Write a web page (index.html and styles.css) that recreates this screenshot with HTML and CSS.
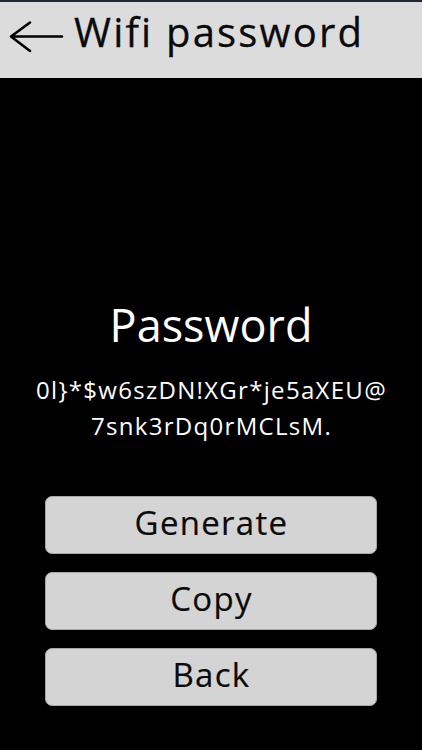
FILE: index.html
```html
<!DOCTYPE html>
<html lang="en">
<head>
<meta charset="utf-8">
<title>Wifi password</title>
<link rel="stylesheet" href="styles.css">
</head>
<body>
<header class="topbar">
  <svg class="back-icon" width="56" height="34" viewBox="0 0 56 34" aria-hidden="true">
    <path d="M3 16.5 H54 M22 2.5 L3 16.5 L22 31" fill="none" stroke="#000" stroke-width="2.6" stroke-linecap="round" stroke-linejoin="round"/>
  </svg>
  <h1 class="title">Wifi password</h1>
</header>
<main class="content">
  <h2 class="label">Password</h2>
  <p class="password">0l}*$w6szDN!XGr*je5aXEU@<br>7snk3rDq0rMCLsM.</p>
  <div class="actions">
    <button class="btn">Generate</button>
    <button class="btn">Copy</button>
    <button class="btn">Back</button>
  </div>
</main>
</body>
</html>
```
FILE: styles.css
```css
html, body {
  margin: 0;
  padding: 0;
  background: #000;
  font-family: "Open Sans", "Noto Sans", sans-serif;
}
body {
  width: 422px;
  height: 750px;
  overflow: hidden;
}
.topbar {
  box-sizing: border-box;
  height: 78px;
  border-top: 2px solid #1d2a30;
  background: #dcdcdc;
  display: flex;
  align-items: flex-start;
}
.back-icon {
  margin: 18px 0 0 8px;
  flex: none;
}
.title {
  margin: 0 0 0 10px;
  font-size: 40px;
  font-weight: 400;
  line-height: 60px;
  color: #0a0a0a;
  letter-spacing: 2.2px;
  -webkit-text-stroke: 0.3px #0a0a0a;
}
.content {
  display: flex;
  flex-direction: column;
  align-items: center;
}
.label {
  margin: 220px 0 0;
  font-size: 45px;
  font-weight: 400;
  line-height: 54px;
  color: #fff;
}
.password {
  margin: 20px 0 0;
  padding-left: 1px;
  font-size: 24px;
  line-height: 36px;
  letter-spacing: 1.3px;
  color: #fff;
  text-align: center;
}
.actions {
  margin-top: 52px;
  width: 332px;
  display: flex;
  flex-direction: column;
  gap: 18px;
}
.btn {
  box-sizing: border-box;
  height: 58px;
  padding: 0 0 5px 1px;
  border: 1px solid #a8a8a8;
  border-radius: 7px;
  background: #d4d4d4;
  color: #0a0a0a;
  font-family: "Open Sans", "Noto Sans", sans-serif;
  font-size: 33px;
  line-height: 1;
  letter-spacing: 1.3px;
  -webkit-text-stroke: 0.2px #0a0a0a;
  display: flex;
  align-items: center;
  justify-content: center;
}
```
